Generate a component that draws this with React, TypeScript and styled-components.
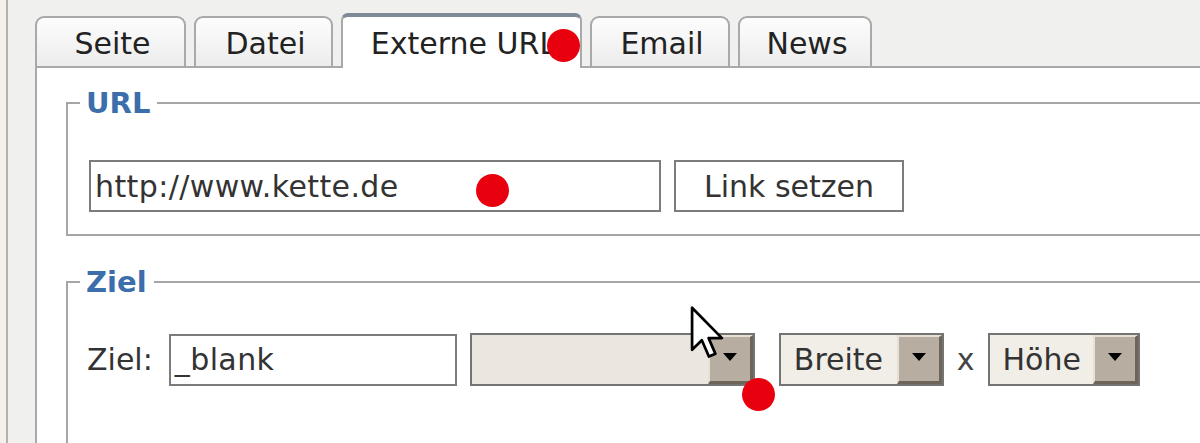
import styled, { createGlobalStyle, css } from "styled-components";

const GlobalStyle = createGlobalStyle`
  html, body {
    margin: 0;
    padding: 0;
    background: #f0f0ee;
    overflow: hidden;
  }
  body {
    font-family: "DejaVu Sans", Verdana, sans-serif;
    color: #2e2e2e;
  }
`;

const tabs = [
  { label: "Seite", width: 151 },
  { label: "Datei", width: 139 },
  { label: "Externe URL", width: 241, active: true },
  { label: "Email", width: 140 },
  { label: "News", width: 134 },
];

// rote Markierungen über dem Dialog
const marks = [
  { x: 563, y: 45 },
  { x: 492, y: 190 },
  { x: 758, y: 394 },
];

const App = () => {
  return (
    <Page>
      <GlobalStyle />
      <Gutter />
      <GutterLine />
      <Main>
        <TabBar>
          {tabs.map((tab) => (
            <Tab key={tab.label} $width={tab.width} $active={!!tab.active}>
              {tab.label}
            </Tab>
          ))}
        </TabBar>
        <Panel>
          <Group $gap={18} $padTop={40} $padBottom={22}>
            <Legend>URL</Legend>
            <Row>
              <TextBox $width={572}>http://www.kette.de</TextBox>
              <Button>Link setzen</Button>
            </Row>
          </Group>
          <Group $gap={29} $padTop={34} $padBottom={120}>
            <Legend>Ziel</Legend>
            <Row>
              <Label>Ziel:</Label>
              <TextBox $width={288}>_blank</TextBox>
              <Select $width={285} $empty>
                <SelectValue />
                <DropButton>
                  <Arrow />
                </DropButton>
              </Select>
              <Select $width={165} $spaced>
                <SelectValue>Breite</SelectValue>
                <DropButton>
                  <Arrow />
                </DropButton>
              </Select>
              <Times>x</Times>
              <Select $width={152}>
                <SelectValue>Höhe</SelectValue>
                <DropButton>
                  <Arrow />
                </DropButton>
              </Select>
            </Row>
          </Group>
        </Panel>
      </Main>

      <Cursor viewBox="0 0 13 21" width="36" height="57">
        <path
          d="M1 1 L1 16.5 L4.6 13 L7.2 19 L9.6 18 L7.1 12.2 L12 12.2 Z"
          fill="#ffffff"
          stroke="#000000"
          strokeWidth="1"
          strokeLinejoin="round"
        />
      </Cursor>

      {marks.map((m, i) => (
        <Mark key={i} $x={m.x} $y={m.y} />
      ))}
    </Page>
  );
};

const Page = styled.div`
  position: relative;
  display: flex;
  width: 1200px;
  height: 443px;
  overflow: hidden;
`;

const Gutter = styled.div`
  width: 6px;
  flex-shrink: 0;
  background: #f4efeb;
`;

const GutterLine = styled.div`
  width: 2px;
  flex-shrink: 0;
  background: #b4b2b0;
`;

const Main = styled.div`
  flex: 1;
  display: flex;
  flex-direction: column;
  padding-left: 27px;
  min-width: 0;
`;

const TabBar = styled.div`
  display: flex;
  align-items: flex-end;
  gap: 8px;
  height: 66px;
  flex-shrink: 0;
`;

const Tab = styled.div<{ $width: number; $active: boolean }>`
  box-sizing: border-box;
  width: ${({ $width }) => $width}px;
  height: 50px;
  display: flex;
  align-items: center;
  justify-content: center;
  padding: 2px 0 0 4px;
  font-size: 30px;
  color: #222;
  border: 2px solid #a9a9a9;
  border-bottom: none;
  border-radius: 9px 9px 0 0;
  background: linear-gradient(#fdfdfd, #ececec);

  ${({ $active }) =>
    $active &&
    css`
      height: 55px;
      margin-bottom: -2px;
      border-top: 4px solid #7f8a98;
      border-radius: 7px 7px 0 0;
      background: #ffffff;
      position: relative;
      z-index: 1;
    `}
`;

const Panel = styled.div`
  flex: 1;
  margin-right: -120px;
  padding-left: 29px;
  background: #ffffff;
  border-top: 2px solid #a9a9a9;
  border-left: 2px solid #a9a9a9;
`;

const Group = styled.fieldset<{ $gap: number; $padTop: number; $padBottom: number }>`
  margin: ${({ $gap }) => $gap}px 0 0 0;
  padding: ${({ $padTop, $padBottom }) => `${$padTop}px 0 ${$padBottom}px 21px`};
  border: 2px solid #a6a6a6;
  min-width: 0;
`;

const Legend = styled.legend`
  margin-left: -9px;
  padding: 0 7px 0 6px;
  font-size: 29px;
  line-height: 34px;
  font-weight: bold;
  color: #3b6eaa;
`;

const Row = styled.div`
  display: flex;
  align-items: center;
  gap: 13px;
`;

const Label = styled.span`
  font-size: 30px;
  color: #333;
  margin-left: -2px;
  margin-right: 3px;
`;

const TextBox = styled.div<{ $width: number }>`
  box-sizing: border-box;
  width: ${({ $width }) => $width}px;
  height: 52px;
  display: flex;
  align-items: center;
  padding: 0 4px;
  font-size: 30px;
  letter-spacing: 0.4px;
  color: #333;
  background: #ffffff;
  border: 2px solid #7c7c7c;
`;

const Button = styled.div`
  box-sizing: border-box;
  height: 52px;
  display: flex;
  align-items: center;
  padding: 0 28px;
  font-size: 30px;
  color: #333;
  background: #ffffff;
  border: 2px solid #7c7c7c;
`;

const Select = styled.div<{ $width: number; $empty?: boolean; $spaced?: boolean }>`
  box-sizing: border-box;
  width: ${({ $width }) => $width}px;
  height: 53px;
  display: flex;
  margin-left: ${({ $spaced }) => ($spaced ? 11 : 0)}px;
  background: ${({ $empty }) => ($empty ? "#ebe7e0" : "#f1eee8")};
  border: 2px solid #747474;
`;

const SelectValue = styled.div`
  flex: 1;
  display: flex;
  align-items: center;
  padding-left: 13px;
  font-size: 30px;
  color: #333;
`;

const DropButton = styled.div`
  box-sizing: border-box;
  width: 45px;
  display: flex;
  justify-content: center;
  padding-top: 16px;
  background: #b7aea1;
  border-top: 2px solid #e6e0d6;
  border-left: 2px solid #e6e0d6;
  border-right: 3px solid #6d655a;
  border-bottom: 3px solid #6d655a;
`;

const Arrow = styled.div`
  width: 0;
  height: 0;
  border-left: 7px solid transparent;
  border-right: 7px solid transparent;
  border-top: 8px solid #000000;
`;

const Times = styled.span`
  font-size: 30px;
  color: #444;
`;

const Cursor = styled.svg`
  position: absolute;
  left: 689px;
  top: 305px;
  z-index: 4;
`;

const Mark = styled.div<{ $x: number; $y: number }>`
  position: absolute;
  left: ${({ $x }) => $x - 16}px;
  top: ${({ $y }) => $y - 16}px;
  width: 33px;
  height: 33px;
  border-radius: 50%;
  background: #e8000e;
  z-index: 5;
`;

export default App;
